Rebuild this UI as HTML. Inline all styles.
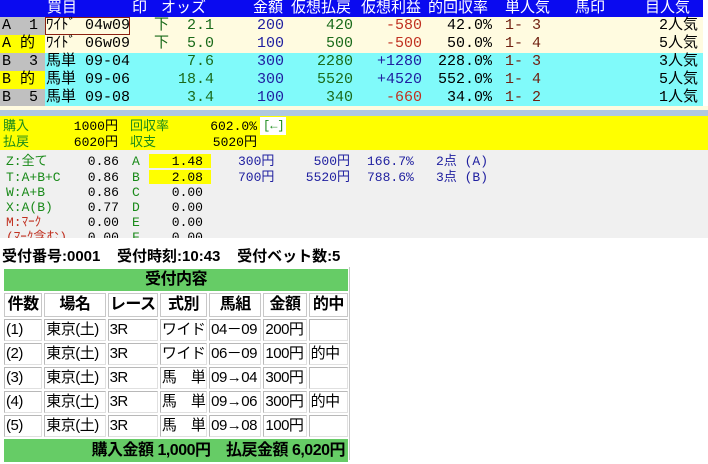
<!DOCTYPE html>
<html><head><meta charset="utf-8">
<style>
*{margin:0;padding:0;box-sizing:border-box}
body{width:708px;height:460px;background:#fff;position:relative;overflow:hidden;font-family:"Liberation Mono","Noto Sans CJK JP",monospace}
.a{position:absolute;white-space:nowrap}
.top{font-size:15px;line-height:18px}
.r{text-align:right}
.sm{font-size:12px;line-height:15px}
.gn{color:#1a8a1a}.bl{color:#2020a0}.rd{color:#c03020}.dg{color:#1a6a1a}
table{position:absolute;left:2px;top:267px;border-collapse:separate;border-spacing:2px;font-family:"Liberation Sans","Noto Sans CJK JP",sans-serif;font-size:15px;width:348px;table-layout:fixed}
td{border:1px solid #b8b8b8;border-right-color:#e0e0e0;border-bottom-color:#e0e0e0;height:22px;line-height:18px;padding:0 1px;white-space:nowrap;overflow:hidden;letter-spacing:-0.5px}
th{height:24px;line-height:20px;border:1px solid #c8c8c8;font-weight:bold;font-size:16px;white-space:nowrap;overflow:hidden;padding:0;letter-spacing:-0.5px}
</style></head><body>
<!-- header -->
<div class="a" style="left:0;top:0;width:703px;height:17px;background:#0a0af0"></div>
<div class="a top" style="left:0;top:0;color:#fff;width:703px;height:18px">
<span class="a" style="left:47px">買目</span><span class="a" style="left:132px">印</span><span class="a" style="left:161px">オッズ</span><span class="a" style="left:253px">金額</span><span class="a" style="left:291px">仮想払戻</span><span class="a" style="left:361px">仮想利益</span><span class="a" style="left:428px">的回収率</span><span class="a" style="left:505px">単人気</span><span class="a" style="left:575px">馬印</span><span class="a" style="left:645px">目人気</span></div>
<!-- rows -->
<div class="a" style="left:0;top:17px;width:703px;height:36px;background:#fffbe0"></div>
<div class="a" style="left:0;top:53px;width:703px;height:53px;background:#80fafa"></div>
<div class="a" style="left:0;top:17px;width:45px;height:18px;background:#c0c0c0"></div>
<div class="a" style="left:0;top:35px;width:45px;height:18px;background:#ffff00"></div>
<div class="a" style="left:0;top:53px;width:45px;height:18px;background:#c0c0c0"></div>
<div class="a" style="left:0;top:71px;width:45px;height:18px;background:#ffff00"></div>
<div class="a" style="left:0;top:89px;width:45px;height:17px;background:#c0c0c0"></div>
<div class="a" style="left:45px;top:17px;width:85px;height:18px;border:1px solid #8b2010"></div>
<div class="a" style="left:0;top:106px;width:708px;height:4px;background:#fffbe0"></div>
<div class="a" style="left:0;top:110px;width:708px;height:6px;background:#b0c8e0"></div>

<div class="a top" style="top:17px;left:0;width:708px;height:90px">
 <div class="a" style="left:2px;top:0">A&nbsp;&nbsp;1</div><div class="a" style="left:2px;top:18px">A 的</div><div class="a" style="left:2px;top:36px">B&nbsp;&nbsp;3</div><div class="a" style="left:2px;top:54px">B 的</div><div class="a" style="left:2px;top:72px">B&nbsp;&nbsp;5</div>
 <div class="a" style="left:46px;top:0">ﾜｲﾄﾞ 04w09</div><div class="a" style="left:46px;top:18px">ﾜｲﾄﾞ 06w09</div><div class="a" style="left:46px;top:36px">馬単 09-04</div><div class="a" style="left:46px;top:54px">馬単 09-06</div><div class="a" style="left:46px;top:72px">馬単 09-08</div>
 <div class="a dg" style="left:154px;top:0">下</div><div class="a dg" style="left:154px;top:18px">下</div>
 <div class="a r dg" style="right:494px;top:0">2.1</div><div class="a r dg" style="right:494px;top:18px">5.0</div><div class="a r dg" style="right:494px;top:36px">7.6</div><div class="a r dg" style="right:494px;top:54px">18.4</div><div class="a r dg" style="right:494px;top:72px">3.4</div>
 <div class="a r bl" style="right:424px;top:0">200</div><div class="a r bl" style="right:424px;top:18px">100</div><div class="a r bl" style="right:424px;top:36px">300</div><div class="a r bl" style="right:424px;top:54px">300</div><div class="a r bl" style="right:424px;top:72px">100</div>
 <div class="a r dg" style="right:355px;top:0">420</div><div class="a r dg" style="right:355px;top:18px">500</div><div class="a r dg" style="right:355px;top:36px">2280</div><div class="a r dg" style="right:355px;top:54px">5520</div><div class="a r dg" style="right:355px;top:72px">340</div>
 <div class="a r rd" style="right:286px;top:0">-580</div><div class="a r rd" style="right:286px;top:18px">-500</div><div class="a r bl" style="right:286px;top:36px">+1280</div><div class="a r bl" style="right:286px;top:54px">+4520</div><div class="a r rd" style="right:286px;top:72px">-660</div>
 <div class="a r" style="right:216px;top:0">42.0%</div><div class="a r" style="right:216px;top:18px">50.0%</div><div class="a r" style="right:216px;top:36px">228.0%</div><div class="a r" style="right:216px;top:54px">552.0%</div><div class="a r" style="right:216px;top:72px">34.0%</div>
 <div class="a" style="left:505px;top:0;color:#702010">1- 3</div><div class="a" style="left:505px;top:18px;color:#702010">1- 4</div><div class="a" style="left:505px;top:36px;color:#702010">1- 3</div><div class="a" style="left:505px;top:54px;color:#702010">1- 4</div><div class="a" style="left:505px;top:72px;color:#702010">1- 2</div>
 <div class="a r" style="right:10px;top:0">2人気</div><div class="a r" style="right:10px;top:18px">5人気</div><div class="a r" style="right:10px;top:36px">3人気</div><div class="a r" style="right:10px;top:54px">5人気</div><div class="a r" style="right:10px;top:72px">1人気</div>
</div>
<!-- yellow -->
<div class="a" style="left:0;top:116px;width:708px;height:34px;background:#ffff00"></div>
<div class="a" style="left:260px;top:117px;width:26px;height:18px;background:#fff"></div>
<div class="a sm" style="left:0;top:119px;width:708px;font-size:13px">
 <span class="a gn" style="left:3px">購入</span><span class="a r" style="right:590px">1000円</span><span class="a gn" style="left:130px">回収率</span><span class="a r" style="right:451px">602.0%</span><span class="a gn" style="left:263px;font-size:12px">[←]</span>
 <span class="a gn" style="left:3px;top:16px">払戻</span><span class="a r" style="right:590px;top:16px">6020円</span><span class="a gn" style="left:130px;top:16px">収支</span><span class="a r" style="right:451px;top:16px">5020円</span>
</div>
<!-- gray -->
<div class="a" style="left:0;top:150px;width:708px;height:88px;background:#f0f0f0;overflow:hidden">
 <div class="a" style="left:149px;top:4px;width:62px;height:14px;background:#ffff00"></div>
 <div class="a" style="left:149px;top:20px;width:62px;height:14px;background:#ffff00"></div>
 <div class="a sm" style="left:0;top:4px;width:708px;font-size:13px">
  <span class="a gn" style="left:6px;top:0">Z:全て</span><span class="a gn" style="left:6px;top:16px">T:A+B+C</span><span class="a gn" style="left:6px;top:31px">W:A+B</span><span class="a gn" style="left:6px;top:46px">X:A(B)</span><span class="a rd" style="left:6px;top:61px">M:ﾏｰｸ</span><span class="a rd" style="left:6px;top:76px">(ﾏｰｸ含む)</span>
  <span class="a r" style="right:589px;top:0">0.86</span><span class="a r" style="right:589px;top:16px">0.86</span><span class="a r" style="right:589px;top:31px">0.86</span><span class="a r" style="right:589px;top:46px">0.77</span><span class="a r" style="right:589px;top:61px">0.00</span><span class="a r" style="right:589px;top:76px">0.00</span>
  <span class="a gn" style="left:132px;top:0">A</span><span class="a gn" style="left:132px;top:16px">B</span><span class="a gn" style="left:132px;top:31px">C</span><span class="a gn" style="left:132px;top:46px">D</span><span class="a gn" style="left:132px;top:61px">E</span><span class="a gn" style="left:132px;top:76px">F</span>
  <span class="a r" style="right:505px;top:0">1.48</span><span class="a r" style="right:505px;top:16px">2.08</span><span class="a r" style="right:505px;top:31px">0.00</span><span class="a r" style="right:505px;top:46px">0.00</span><span class="a r" style="right:505px;top:61px">0.00</span><span class="a r" style="right:505px;top:76px">0.00</span>
  <span class="a bl" style="left:238px;top:0">300円</span><span class="a bl" style="left:238px;top:16px">700円</span>
  <span class="a r bl" style="right:358px;top:0">500円</span><span class="a r bl" style="right:358px;top:16px">5520円</span>
  <span class="a bl" style="left:367px;top:0">166.7%</span><span class="a bl" style="left:367px;top:16px">788.6%</span>
  <span class="a bl" style="left:436px;top:0">2点 (A)</span><span class="a bl" style="left:436px;top:16px">3点 (B)</span>
 </div>
</div>
<!-- receipt -->
<div class="a" style="left:2px;top:247px;font-family:'Liberation Sans','Noto Sans CJK JP',sans-serif;font-size:15px;font-weight:bold;line-height:20px">受付番号:0001&nbsp;&nbsp;&nbsp;&nbsp;受付時刻:10:43&nbsp;&nbsp;&nbsp;&nbsp;受付ベット数:5</div>
<div class="a" style="left:349px;top:267px;width:1px;height:193px;background:#c8c8c8"></div>
<table>
<colgroup><col style="width:38px"><col style="width:61px"><col style="width:50px"><col style="width:47px"><col style="width:52px"><col style="width:43px"><col style="width:39px"></colgroup>
<tr><td colspan="7" style="background:#66cc66;text-align:center;font-weight:bold;font-size:16px;border:none;height:22px">受付内容</td></tr>
<tr><th>件数</th><th>場名</th><th>レース</th><th>式別</th><th>馬組</th><th>金額</th><th>的中</th></tr>
<tr><td>(1)</td><td>東京(土)</td><td>3R</td><td>ワイド</td><td>04－09</td><td>200円</td><td></td></tr>
<tr><td>(2)</td><td>東京(土)</td><td>3R</td><td>ワイド</td><td>06－09</td><td>100円</td><td>的中</td></tr>
<tr><td>(3)</td><td>東京(土)</td><td>3R</td><td>馬　単</td><td>09→04</td><td>300円</td><td></td></tr>
<tr><td>(4)</td><td>東京(土)</td><td>3R</td><td>馬　単</td><td>09→06</td><td>300円</td><td>的中</td></tr>
<tr><td>(5)</td><td>東京(土)</td><td>3R</td><td>馬　単</td><td>09→08</td><td>100円</td><td></td></tr>
<tr><td colspan="7" style="background:#66cc66;text-align:right;font-weight:bold;font-size:16px;border:none;height:23px;padding-right:3px">購入金額 1,000円　払戻金額 6,020円</td></tr>
</table>
</body></html>
